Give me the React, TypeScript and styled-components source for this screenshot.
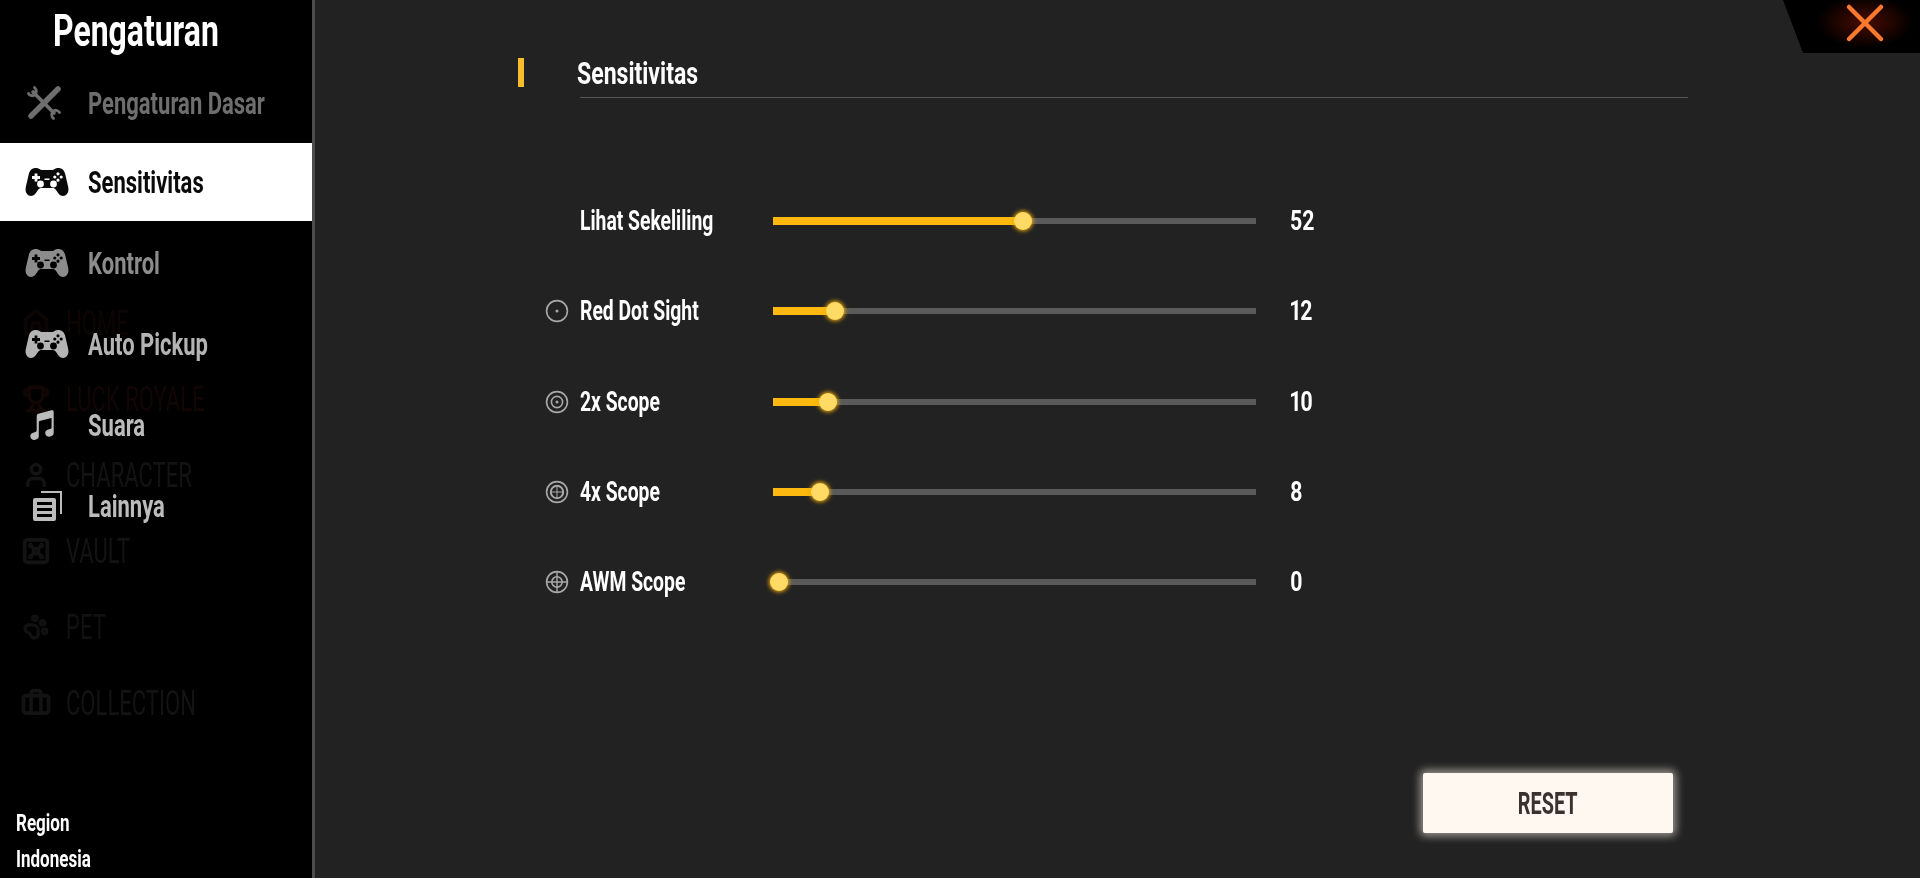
import React from 'react';
import styled, { createGlobalStyle } from 'styled-components';
import { IoMusicalNotes } from 'react-icons/io5';
import { Briefcase, Home, PawPrint, Trophy, User, Vault } from 'lucide-react';

const Global = createGlobalStyle`
  html, body { margin: 0; padding: 0; background: #222222; }
  * { box-sizing: border-box; }
`;

const Screen = styled.div`
  position: relative;
  display: flex;
  width: 1920px;
  height: 878px;
  overflow: hidden;
  background: #222222;
  font-family: Roboto, "Liberation Sans", sans-serif;
  font-weight: 700;
  filter: blur(0.45px);
`;

const Sidebar = styled.aside`
  position: relative;
  display: flex;
  flex-direction: column;
  flex-shrink: 0;
  width: 315px;
  height: 100%;
  background: #000;
  border-right: 3px solid #4c4c4c;
`;

const Condensed = styled.span<{ $size: number; $squeeze?: number; $origin?: string }>`
  display: inline-block;
  font-size: ${p => p.$size}px;
  line-height: 1;
  white-space: nowrap;
  font-variant-numeric: proportional-nums;
  transform: scaleX(${p => p.$squeeze ?? 0.7});
  transform-origin: ${p => p.$origin ?? 'left center'};
`;

const Title = styled.h1`
  height: 62px;
  margin: 0;
  padding: 8px 0 0 53px;
  color: #fff;
  font-weight: 700;
`;

const Nav = styled.nav`
  position: relative;
  display: flex;
  flex-direction: column;
  gap: 3px;
`;

const NavRow = styled.div<{ $active?: boolean; $tone: string }>`
  display: flex;
  align-items: center;
  height: 78px;
  padding-left: 25px;
  background: ${p => (p.$active ? '#fff' : 'transparent')};
  color: ${p => (p.$active ? '#0a0a0a' : p.$tone)};
  &:first-child { padding-top: 4px; }
`;

const NavIcon = styled.div<{ $pad?: string }>`
  display: flex;
  flex-shrink: 0;
  justify-content: center;
  align-items: center;
  width: 44px;
  margin-right: 19px;
  padding: ${p => p.$pad ?? '0'};
`;

const GhostLayer = styled.div`
  position: absolute;
  top: 298px;
  left: 18px;
  display: flex;
  flex-direction: column;
  gap: 26px;
  pointer-events: none;
`;

const GhostRow = styled.div<{ $tone: string }>`
  display: flex;
  align-items: center;
  height: 50px;
  color: ${p => p.$tone};
`;

const GhostMark = styled.div`
  display: flex;
  justify-content: center;
  width: 36px;
  margin-right: 12px;
`;

const GhostLabel = styled(Condensed)`
  font-weight: 400;
`;

const RegionBox = styled.div`
  display: flex;
  flex-direction: column;
  gap: 13px;
  margin-top: auto;
  padding: 0 0 7px 16px;
  color: #fff;
`;

const Main = styled.main`
  display: flex;
  flex-direction: column;
  flex: 1;
  padding-top: 56px;
`;

const Header = styled.header`
  display: flex;
  align-items: flex-start;
  margin-left: 203px;
`;

const HeaderBar = styled.div`
  width: 6px;
  height: 29px;
  margin-top: 2px;
  margin-right: 56px;
  background: #f6bd2d;
`;

const HeaderTitle = styled.div`
  width: 1108px;
  height: 42px;
  padding-top: 1px;
  border-bottom: 1px solid #565656;
  color: #fff;
  & > span { margin-left: -3px; }
`;

const SliderList = styled.section`
  display: grid;
  grid-auto-rows: 90.25px;
  margin: 78px 0 0 230px;
`;

const SliderRow = styled.div`
  display: grid;
  grid-template-columns: 35px 193px 483px 1fr;
  align-items: center;
  color: #fff;
`;

const ScopeIcon = styled.svg`
  display: block;
  width: 24px;
  height: 24px;
  fill: none;
  stroke: #a8a8a8;
`;

const Track = styled.div`
  position: relative;
  height: 6px;
  background: #5a5a5a;
`;

const Fill = styled.div`
  position: absolute;
  top: -1px;
  left: 0;
  height: 8px;
  background: #fdb90f;
`;

const Thumb = styled.div`
  position: absolute;
  top: 50%;
  width: 18px;
  height: 18px;
  margin-left: -9px;
  margin-top: -9px;
  border-radius: 50%;
  background: #ffdb66;
  box-shadow: 0 0 4px 1px #f5ae08;
`;

const SliderValue = styled.div`
  padding-left: 34px;
`;

const CloseCorner = styled.div`
  position: absolute;
  top: 0;
  right: 0;
  width: 137px;
  height: 53px;
  display: flex;
  align-items: center;
  justify-content: center;
  padding: 0 0 8px 27px;
  background: radial-gradient(ellipse 48px 26px at 82px 22px, #460c00 0%, #260600 50%, #000 100%);
  clip-path: polygon(0 0, 100% 0, 100% 100%, 20px 100%);
`;

const ResetButton = styled.button`
  position: absolute;
  left: 1423px;
  top: 773px;
  width: 250px;
  height: 60px;
  padding: 0;
  border: 0;
  border-radius: 2px;
  background: #fff8f0;
  box-shadow: 0 0 9px 3px rgba(255, 250, 235, 0.55);
  color: #3b322d;
  font-family: inherit;
  font-weight: 700;
`;

const Pad = ({ size = 44 }: { size?: number }) => {
  const dot = (x: number, y: number, r: number) =>
    `M${x - r} ${y}a${r} ${r} 0 1 0 ${2 * r} 0a${r} ${r} 0 1 0 ${-2 * r} 0Z`;
  const body =
    'M11 1C7 1 5 3 3.8 7L.8 20C-.2 25 2 29 6 29C9 29 11 26 13 23C14 21.5 15 21 17 21H27C29 21 30 21.5 31 23C33 26 35 29 38 29C42 29 44.2 25 43.2 20L40.2 7C39 3 37 1 33 1C30 1 29 3 27 3H17C15 3 14 1 11 1Z';
  const plus = 'M9.6 6.5h2.8v2.6h2.6v2.8h-2.6v2.6h-2.8v-2.6H7v-2.8h2.6Z';
  const d = [
    body,
    plus,
    dot(33, 6.8, 1.6),
    dot(33, 13.2, 1.6),
    dot(29.8, 10, 1.6),
    dot(36.2, 10, 1.6),
    dot(15.5, 17, 3.4),
    dot(28.5, 17, 3.4),
    'M19.5 11.5h5v1.6h-5Z',
  ].join('');
  return (
    <svg width={size} height={(size * 30) / 44} viewBox="0 0 44 30">
      <path d={d} fill="currentColor" fillRule="evenodd" />
    </svg>
  );
};

const Tools = () => (
  <svg width="34" height="34" viewBox="0 0 34 34" fill="none" stroke="currentColor" strokeLinecap="round">
    <path d="M31 3L4 30" strokeWidth="5.5" />
    <path d="M6 6L27 27" strokeWidth="3.6" />
    <path d="M1.5 7.5C3 10 6 10.5 8 8.5C10 6.5 9.5 3.5 7.5 1.5" strokeWidth="2.8" />
    <path d="M32.5 26.5C31 24 28 23.5 26 25.5C24 27.5 24.5 30.5 26.5 32.5" strokeWidth="2.8" />
  </svg>
);

const Docs = () => (
  <svg width="30" height="30" viewBox="0 0 30 30">
    <path d="M8 1h20v22" fill="none" stroke="currentColor" strokeWidth="2" />
    <path
      fillRule="evenodd"
      fill="currentColor"
      d="M2 7h19a2 2 0 0 1 2 2v19a2 2 0 0 1-2 2H2a2 2 0 0 1-2-2V9a2 2 0 0 1 2-2ZM4 11v3h15v-3ZM4 17v3h15v-3ZM4 23v3h15v-3Z"
    />
  </svg>
);

type Reticle = 'dot' | 'two' | 'four' | 'awm';

const Scope = ({ kind }: { kind: Reticle }) => (
  <ScopeIcon viewBox="0 0 24 24" strokeWidth="1.6">
    <circle cx="12" cy="12" r="10.4" />
    {kind === 'dot' && <circle cx="12" cy="12" r="1.5" fill="#a8a8a8" stroke="none" />}
    {kind === 'two' && (
      <>
        <circle cx="12" cy="12" r="5.6" />
        <circle cx="12" cy="12" r="1.5" fill="#a8a8a8" stroke="none" />
      </>
    )}
    {kind === 'four' && (
      <>
        <circle cx="12" cy="12" r="6.2" strokeWidth="2" />
        <path d="M12 5v14M5 12h14" strokeWidth="1" />
      </>
    )}
    {kind === 'awm' && (
      <>
        <circle cx="12" cy="12" r="5.2" />
        <path d="M12 1v22M1 12h22" strokeWidth="1.4" />
      </>
    )}
  </ScopeIcon>
);

const navItems = [
  { label: 'Pengaturan Dasar', tone: '#6e6e6e', icon: <Tools />, pad: '0 7px 0 0' },
  { label: 'Sensitivitas', tone: '#0a0a0a', icon: <Pad />, active: true },
  { label: 'Kontrol', tone: '#8c8c8c', icon: <Pad /> },
  { label: 'Auto Pickup', tone: '#b4b4b4', icon: <Pad /> },
  { label: 'Suara', tone: '#bcbcbc', icon: <IoMusicalNotes size={42} />, pad: '0 10px 0 0' },
  { label: 'Lainnya', tone: '#bcbcbc', icon: <Docs />, pad: '0 0 0 2px' },
];

const ghosts = [
  { label: 'HOME', tone: '#0d0504', icon: <Home size={28} strokeWidth={3} /> },
  { label: 'LUCK ROYALE', tone: '#120605', icon: <Trophy size={28} strokeWidth={3} /> },
  { label: 'CHARACTER', tone: '#131313', icon: <User size={28} strokeWidth={3} /> },
  { label: 'VAULT', tone: '#131313', icon: <Vault size={30} strokeWidth={3} /> },
  { label: 'PET', tone: '#111111', icon: <PawPrint size={26} strokeWidth={3} /> },
  { label: 'COLLECTION', tone: '#131313', icon: <Briefcase size={30} strokeWidth={3} /> },
];

const sliders: { label: string; value: number; at: number; reticle?: Reticle }[] = [
  { label: 'Lihat Sekeliling', value: 52, at: 250 },
  { label: 'Red Dot Sight', value: 12, at: 62, reticle: 'dot' },
  { label: '2x Scope', value: 10, at: 55, reticle: 'two' },
  { label: '4x Scope', value: 8, at: 47, reticle: 'four' },
  { label: 'AWM Scope', value: 0, at: 6, reticle: 'awm' },
];

const App: React.FC = () => (
  <Screen>
    <Global />
    <Sidebar>
      <GhostLayer>
        {ghosts.map(g => (
          <GhostRow key={g.label} $tone={g.tone}>
            <GhostMark>{g.icon}</GhostMark>
            <GhostLabel $size={35} $squeeze={0.63}>{g.label}</GhostLabel>
          </GhostRow>
        ))}
      </GhostLayer>
      <Title>
        <Condensed $size={45} $squeeze={0.71}>Pengaturan</Condensed>
      </Title>
      <Nav>
        {navItems.map(item => (
          <NavRow key={item.label} $active={item.active} $tone={item.tone}>
            <NavIcon $pad={item.pad}>{item.icon}</NavIcon>
            <Condensed $size={31} $squeeze={0.71}>{item.label}</Condensed>
          </NavRow>
        ))}
      </Nav>
      <RegionBox>
        <div><Condensed $size={23} $squeeze={0.74}>Region</Condensed></div>
        <div><Condensed $size={23} $squeeze={0.74}>Indonesia</Condensed></div>
      </RegionBox>
    </Sidebar>
    <Main>
      <Header>
        <HeaderBar />
        <HeaderTitle>
          <Condensed $size={32} $squeeze={0.72}>Sensitivitas</Condensed>
        </HeaderTitle>
      </Header>
      <SliderList>
        {sliders.map(s => (
          <SliderRow key={s.label}>
            <div>{s.reticle && <Scope kind={s.reticle} />}</div>
            <Condensed $size={28} $squeeze={0.69}>{s.label}</Condensed>
            <Track>
              <Fill style={{ width: s.at }} />
              <Thumb style={{ left: s.at }} />
            </Track>
            <SliderValue>
              <Condensed $size={28} $squeeze={0.76}>{s.value}</Condensed>
            </SliderValue>
          </SliderRow>
        ))}
      </SliderList>
    </Main>
    <ResetButton>
      <Condensed $size={31} $squeeze={0.64} $origin="center">RESET</Condensed>
    </ResetButton>
    <CloseCorner>
      <svg width="40" height="40" viewBox="0 0 40 40">
        <path d="M4 4L36 36M36 4L4 36" stroke="#f9792f" strokeWidth="4.5" strokeLinecap="round" fill="none" />
      </svg>
    </CloseCorner>
  </Screen>
);

export default App;
